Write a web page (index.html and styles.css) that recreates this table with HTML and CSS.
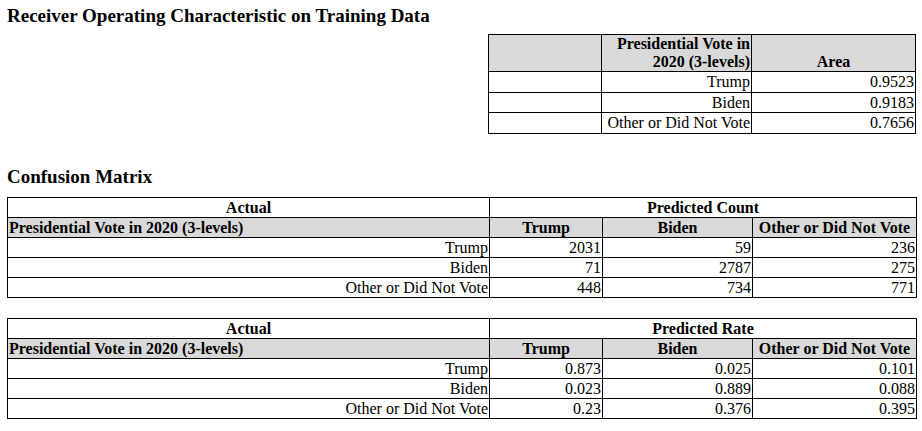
FILE: index.html
```html
<!DOCTYPE html>
<html>
<head>
<meta charset="utf-8">
<link rel="stylesheet" href="styles.css">
</head>
<body>
<div class="page">
  <h1 class="title">Receiver Operating Characteristic on Training Data</h1>
  <div class="roc-wrap">
    <table class="grid roc">
      <colgroup><col class="c-trump"><col class="c-biden"><col class="c-other"></colgroup>
      <thead>
        <tr class="hdr">
          <th></th>
          <th class="r">Presidential Vote in<br>2020 (3-levels)</th>
          <th class="c bottom">Area</th>
        </tr>
      </thead>
      <tbody>
        <tr><td></td><td class="r">Trump</td><td class="r">0.9523</td></tr>
        <tr><td></td><td class="r">Biden</td><td class="r">0.9183</td></tr>
        <tr><td></td><td class="r">Other or Did Not Vote</td><td class="r">0.7656</td></tr>
      </tbody>
    </table>
  </div>

  <h2 class="subtitle">Confusion Matrix</h2>
  <table class="grid cm">
    <colgroup><col class="c-actual"><col class="c-trump"><col class="c-biden"><col class="c-other"></colgroup>
    <thead>
      <tr class="top"><th class="c">Actual</th><th class="c" colspan="3">Predicted Count</th></tr>
      <tr class="hdr"><th class="l">Presidential Vote in 2020 (3-levels)</th><th class="c">Trump</th><th class="c">Biden</th><th class="c">Other or Did Not Vote</th></tr>
    </thead>
    <tbody>
      <tr><td class="r">Trump</td><td class="r">2031</td><td class="r">59</td><td class="r">236</td></tr>
      <tr><td class="r">Biden</td><td class="r">71</td><td class="r">2787</td><td class="r">275</td></tr>
      <tr><td class="r">Other or Did Not Vote</td><td class="r">448</td><td class="r">734</td><td class="r">771</td></tr>
    </tbody>
  </table>

  <table class="grid cm second">
    <colgroup><col class="c-actual"><col class="c-trump"><col class="c-biden"><col class="c-other"></colgroup>
    <thead>
      <tr class="top"><th class="c">Actual</th><th class="c" colspan="3">Predicted Rate</th></tr>
      <tr class="hdr"><th class="l">Presidential Vote in 2020 (3-levels)</th><th class="c">Trump</th><th class="c">Biden</th><th class="c">Other or Did Not Vote</th></tr>
    </thead>
    <tbody>
      <tr><td class="r">Trump</td><td class="r">0.873</td><td class="r">0.025</td><td class="r">0.101</td></tr>
      <tr><td class="r">Biden</td><td class="r">0.023</td><td class="r">0.889</td><td class="r">0.088</td></tr>
      <tr><td class="r">Other or Did Not Vote</td><td class="r">0.23</td><td class="r">0.376</td><td class="r">0.395</td></tr>
    </tbody>
  </table>
</div>
</body>
</html>
```
FILE: styles.css
```css
html, body {
  margin: 0;
  padding: 0;
  background: #ffffff;
}
.page {
  padding: 0 6px 0 7px;
  font-family: "Liberation Serif", "Times New Roman", serif;
  color: #000;
}
.title {
  margin: 0;
  padding-top: 5px;
  font-size: 19px;
  line-height: 22px;
  font-weight: bold;
}
.roc-wrap {
  display: flex;
  justify-content: flex-end;
  margin-top: 7px;
}
.grid {
  border-collapse: collapse;
  table-layout: fixed;
  font-size: 16px;
  line-height: 19px;
}
.grid th, .grid td {
  border: 1px solid #000;
  padding: 0 1px;
  white-space: nowrap;
  overflow: hidden;
}
.grid th {
  font-weight: bold;
  vertical-align: bottom;
}
.hdr th {
  background: #d9d9d9;
}
.top th {
  background: #fff;
}
.r { text-align: right; }
.c { text-align: center; }
.l { text-align: left; }
.roc { width: 428px; }
.roc .hdr th { line-height: 18px; }
.roc td { line-height: 19.5px; }
.c-actual { width: 482px; }
.c-trump { width: 113px; }
.c-biden { width: 150px; }
.c-other { width: 164px; }
.cm { width: 910px; }
.subtitle {
  margin: 0;
  margin-top: 32px;
  font-size: 19px;
  line-height: 22px;
  font-weight: bold;
}
.cm { margin-top: 9px; }
.cm.second { margin-top: 20px; }
```
